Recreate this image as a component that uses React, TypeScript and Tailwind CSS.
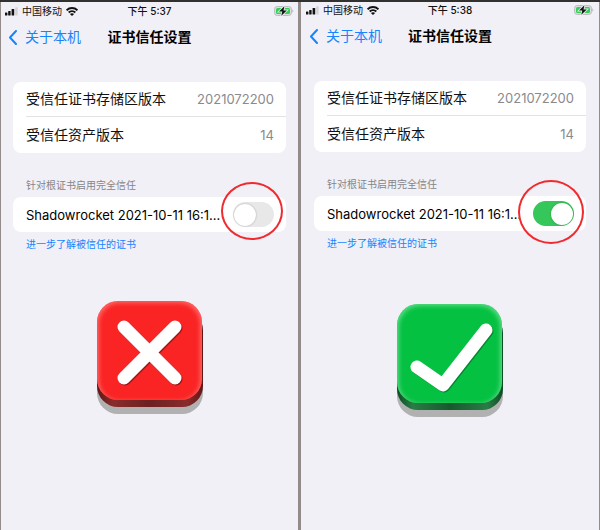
import React from "react";

const fontStack = "font-['Inter','Noto_Sans_CJK_SC',sans-serif]";

function Signal() {
  return (
    <svg width="13" height="9" viewBox="0 0 13 9" aria-hidden="true">
      <rect x="0" y="5.5" width="2.4" height="3" rx="0.6" fill="#111" />
      <rect x="3.2" y="4" width="2.4" height="4.5" rx="0.6" fill="#111" />
      <rect x="6.6" y="2" width="2.6" height="6.5" rx="0.6" fill="#111" />
      <rect x="10.2" y="0.3" width="2.4" height="8.2" rx="0.6" fill="#d2d2d6" />
    </svg>
  );
}

function Wifi() {
  return (
    <svg width="12" height="9" viewBox="0 0 12 9" fill="none" stroke="#111" strokeWidth="1.9" aria-hidden="true">
      <path d="M0.6 3.3C3.6 0.3 8.4 0.3 11.4 3.3" />
      <path d="M2.7 5.5C4.6 3.6 7.4 3.6 9.3 5.5" />
      <path d="M6 9L3.900 7C5.1 5.900 6.900 5.900 8.100 7Z" fill="#111" stroke="none" />
    </svg>
  );
}

function Battery() {
  return (
    <svg width="20" height="10" viewBox="0 0 20 10" aria-hidden="true">
      <rect x="0.5" y="0.5" width="17" height="9" rx="2.8" fill="#dedee2" stroke="#bcbcc0" />
      <path d="M18.4 3.3C19.6 3.8 19.6 6.2 18.4 6.7Z" fill="#b4b4b8" />
      <rect x="2" y="2" width="14" height="6" rx="1.5" fill="#32d058" />
      <path d="M10.4 0.2L5 5.600H8.300L7.300 9.800L12.800 4.400H9.500Z" fill="#111" stroke="#e4e8e6" strokeWidth="1.8" paintOrder="stroke" />
    </svg>
  );
}

function RejectBadge() {
  return (
    <svg width="110" height="116" viewBox="0 0 110 116" role="img" aria-label="错误">
      <defs>
        <filter id="rejectGlow" x="-20%" y="-20%" width="140%" height="140%">
          <feGaussianBlur stdDeviation="2.5" />
        </filter>
        <clipPath id="rejectFace">
          <rect x="1" y="1" width="105" height="99" rx="21" />
        </clipPath>
        <linearGradient id="rejectSide" x1="0" x2="1">
          <stop offset="0" stopColor="#5f1717" />
          <stop offset="0.15" stopColor="#8a2c2c" />
          <stop offset="0.5" stopColor="#6c2020" />
          <stop offset="0.85" stopColor="#8a2c2c" />
          <stop offset="1" stopColor="#5f1717" />
        </linearGradient>
      </defs>
      <rect x="1" y="15" width="106" height="99" rx="21" fill="#b1b1b1" />
      <rect x="1" y="9" width="106" height="98" rx="21" fill="url(#rejectSide)" />
      <rect x="1" y="1" width="105" height="99" rx="21" fill="#fa2424" />
      <g clipPath="url(#rejectFace)">
        <rect x="0" y="0" width="107" height="104" rx="24" fill="none" stroke="#ff8585" strokeWidth="4" filter="url(#rejectGlow)" />
      </g>
      <path d="M29 28L80 79M80 28L29 79" stroke="#a01212" strokeWidth="13" strokeLinecap="round" />
      <path d="M28 27L79 78M79 27L28 78" stroke="#fff" strokeWidth="13" strokeLinecap="round" />
    </svg>
  );
}

function AcceptBadge() {
  return (
    <svg width="110" height="116" viewBox="0 0 110 116" role="img" aria-label="正确">
      <defs>
        <filter id="acceptGlow" x="-20%" y="-20%" width="140%" height="140%">
          <feGaussianBlur stdDeviation="2.5" />
        </filter>
        <clipPath id="acceptFace">
          <rect x="1" y="1" width="105" height="99" rx="21" />
        </clipPath>
        <linearGradient id="acceptSide" x1="0" x2="1">
          <stop offset="0" stopColor="#0d4d25" />
          <stop offset="0.15" stopColor="#2a7c46" />
          <stop offset="0.5" stopColor="#17592f" />
          <stop offset="0.85" stopColor="#2a7c46" />
          <stop offset="1" stopColor="#0d4d25" />
        </linearGradient>
      </defs>
      <rect x="1" y="15" width="106" height="99" rx="21" fill="#b1b1b1" />
      <rect x="1" y="9" width="106" height="98" rx="21" fill="url(#acceptSide)" />
      <rect x="1" y="1" width="105" height="99" rx="21" fill="#04c142" />
      <g clipPath="url(#acceptFace)">
        <rect x="0" y="0" width="107" height="104" rx="24" fill="none" stroke="#7fe8a0" strokeWidth="4" filter="url(#acceptGlow)" />
      </g>
      <path d="M22 65L48 83L91 28" fill="none" stroke="#05852f" strokeWidth="13" strokeLinecap="round" strokeLinejoin="round" />
      <path d="M21 64L47 82L90 27" fill="none" stroke="#fff" strokeWidth="13" strokeLinecap="round" strokeLinejoin="round" />
    </svg>
  );
}

type PhoneProps = {
  id: string;
  time: string;
  trusted: boolean;
  className: string;
  ringClass: string;
  badgeClass: string;
  badge: React.ReactNode;
};

function Phone({ id, time, trusted, className, ringClass, badgeClass, badge }: PhoneProps) {
  return (
    <section className={`min-w-0 bg-[#f1f0f6] ${className}`}>
      <header>
        <div className="grid h-4 grid-cols-[1fr_auto_1fr] items-center px-1 text-[10px] leading-4 text-[#111]">
          <div className="flex items-center gap-1">
            <Signal />
            <span>中国移动</span>
            <Wifi />
          </div>
          <time className="font-medium">{time}</time>
          <div className="flex justify-end">
            <Battery />
          </div>
        </div>
        <div className="grid h-9 grid-cols-[1fr_auto_1fr] items-center px-2 text-[14px] leading-5">
          <button type="button" className="flex items-center gap-2 text-[#1684ff]">
            <svg width="8" height="15" viewBox="0 0 8 15" fill="none" stroke="currentColor" strokeWidth="2" strokeLinecap="round" strokeLinejoin="round" aria-hidden="true">
              <path d="M7 1L1 7.500L7 14" />
            </svg>
            关于本机
          </button>
          <h1 className="font-bold text-black">证书信任设置</h1>
        </div>
      </header>
      <main className="px-3 pt-[27px]">
        <dl className="rounded-lg bg-white pl-[13px] text-[14px] leading-5">
          <div className="flex h-[35px] items-center justify-between border-b border-[#e3e3e6] pr-3">
            <dt className="text-[#111]">受信任证书存储区版本</dt>
            <dd className="text-[13px] text-[#8a8a8e]">2021072200</dd>
          </div>
          <div className="flex h-9 items-center justify-between pr-3">
            <dt className="text-[#111]">受信任资产版本</dt>
            <dd className="text-[13px] text-[#8a8a8e]">14</dd>
          </div>
        </dl>
        <h2 className="mt-[22px] mb-0.5 pl-[13px] text-[10px] leading-5 text-[#85858a]">针对根证书启用完全信任</h2>
        <div className="relative flex h-[35px] items-center justify-between rounded-lg bg-white pr-3 pl-[13px]">
          <label htmlFor={id} className="whitespace-nowrap text-[13px] leading-5 text-black">
            Shadowrocket 2021-10-11 16:1...
          </label>
          <input
            id={id}
            type="checkbox"
            role="switch"
            defaultChecked={trusted}
            className="flex h-[25px] w-[41px] shrink-0 appearance-none items-center rounded-full bg-[#e8e8e9] p-px before:size-[22px] before:rounded-full before:bg-white before:shadow-[0_0_2px_rgba(0,0,0,0.3)] checked:justify-end checked:bg-[#35c759]"
          />
          <span className={`pointer-events-none absolute rounded-[50%] border-2 border-[#f02b30] ${ringClass}`} />
        </div>
        <p className="pl-[13px] text-[10px] leading-6">
          <a href="#certificates" className="text-[#1684ff]">进一步了解被信任的证书</a>
        </p>
        <div className={`flex justify-center pl-0.5 ${badgeClass}`}>{badge}</div>
      </main>
    </section>
  );
}

export default function App() {
  return (
    <div className={`flex min-h-screen flex-col border-t-2 border-[#33312f] bg-[#928b89] ${fontStack}`}>
      <div className="grid flex-1 grid-cols-[minmax(0,298fr)_minmax(0,299fr)] gap-[3px]">
        <Phone
          id="trust-off"
          time="下午 5:37"
          trusted={false}
          className="border-l border-[#928b89] pt-px"
          ringClass="-top-[15px] right-[3px] h-[58px] w-[62px]"
          badgeClass="mt-11"
          badge={<RejectBadge />}
        />
        <Phone
          id="trust-on"
          time="下午 5:38"
          trusted
          className="border-r border-[#928b89] px-px"
          ringClass="-top-4 right-[2px] h-16 w-[66px]"
          badgeClass="mt-12"
          badge={<AcceptBadge />}
        />
      </div>
    </div>
  );
}
